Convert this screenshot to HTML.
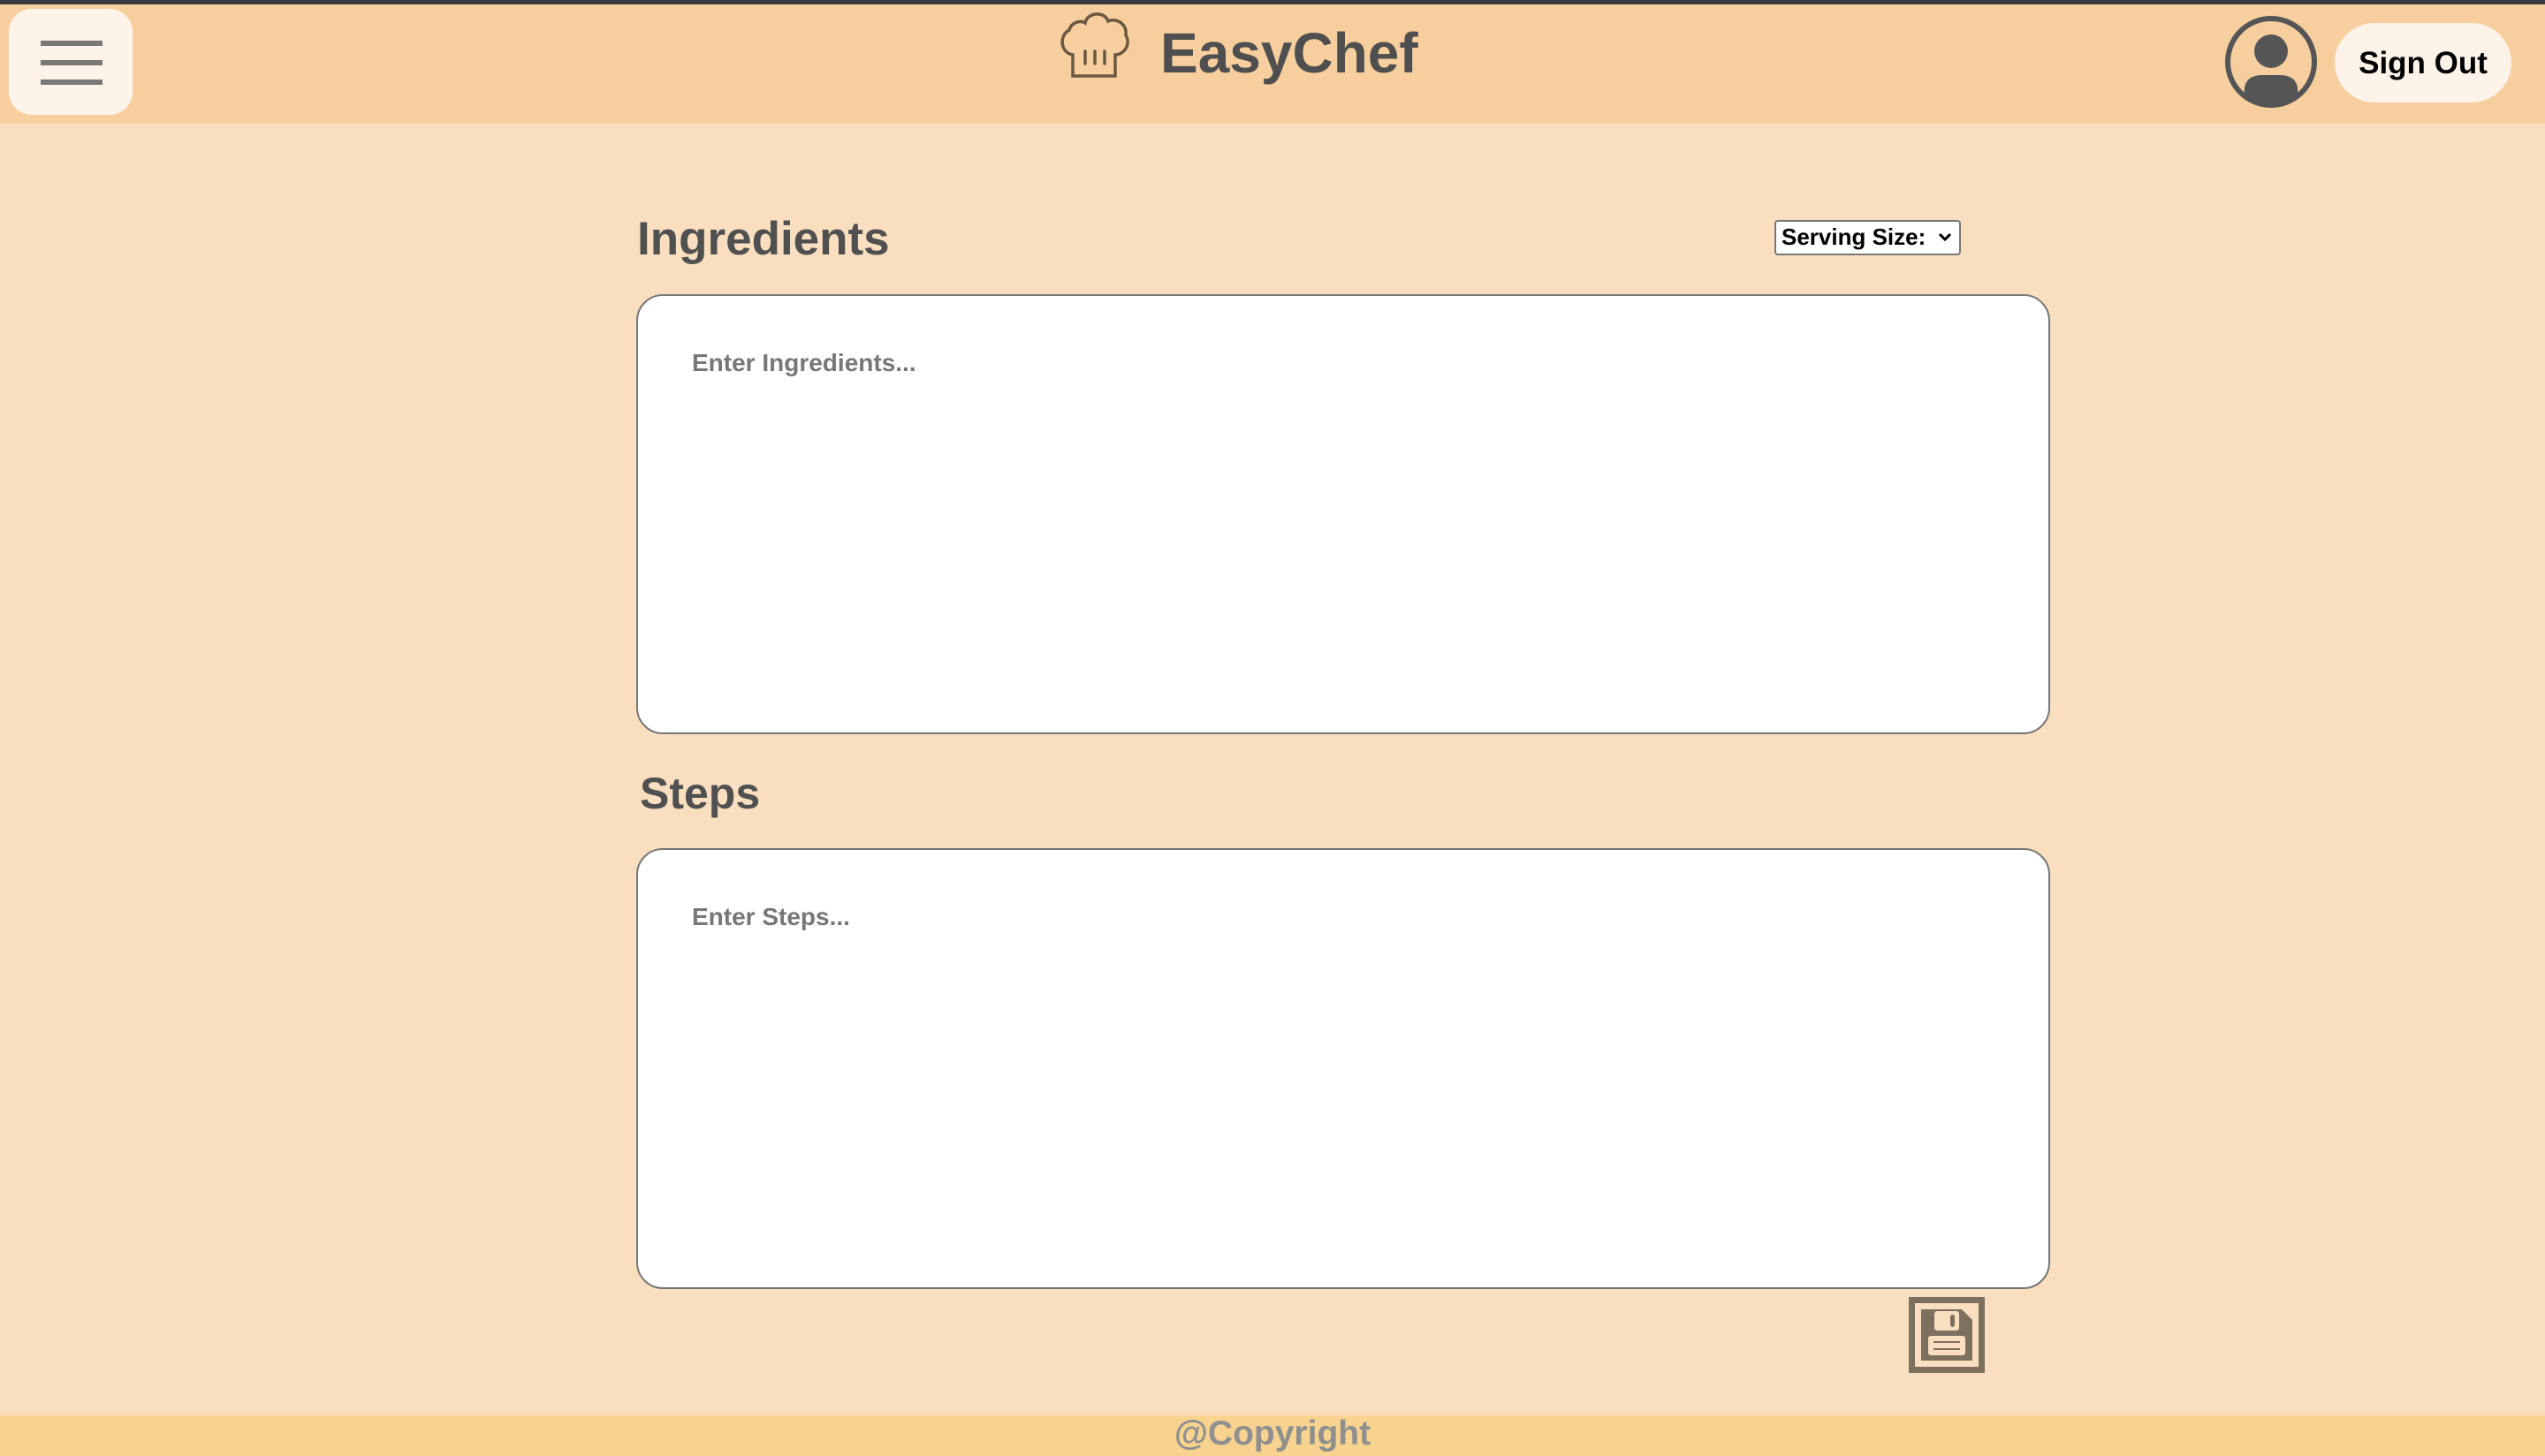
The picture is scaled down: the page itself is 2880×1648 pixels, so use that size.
<!DOCTYPE html>
<html><head><meta charset="utf-8"><style>
*{margin:0;padding:0;box-sizing:border-box}
body{width:2880px;height:1648px;overflow:hidden;background:#f9dfbf;font-family:"Liberation Sans",sans-serif;position:relative}
.a{position:absolute}
.t{line-height:1;white-space:nowrap}
.ta{position:absolute;left:720px;width:1600px;background:#fff;border:2px solid #777;border-radius:30px}
</style></head><body>
<div class="a" style="left:0;top:0;width:2880px;height:140px;background:#f7cf9e"></div>
<div class="a" style="left:0;top:0;width:2880px;height:5px;background:#3a3b40"></div>
<div class="a" style="left:10px;top:10px;width:140px;height:120px;background:#fdf3e9;border-radius:26px"></div>
<div class="a" style="left:46px;top:46px;width:70px;height:6px;background:#7a7876"></div>
<div class="a" style="left:46px;top:68px;width:70px;height:6px;background:#7a7876"></div>
<div class="a" style="left:46px;top:90px;width:70px;height:6px;background:#7a7876"></div>
<svg class="a" style="left:1196px;top:6px" width="86" height="84" viewBox="0 0 86 84" fill="none" stroke="#6b5840" stroke-width="3.5">
<path d="M18 56 C4 54 2 34 14 28 C16 20 26 16 32 20 C34 8 54 6 58 18 C66 14 80 20 78 34 C84 44 76 56 66 56 L66 80 L18 80 Z"/>
<path d="M32 52V66M43 52V66M54 52V66" stroke-linecap="round"/>
</svg>
<div class="a t" style="left:1313px;top:28px;font-size:64px;font-weight:bold;color:#4f4f4f">EasyChef</div>
<svg class="a" style="left:2516px;top:16px" width="108" height="108" viewBox="0 0 108 108">
<circle cx="54" cy="54" r="49" fill="none" stroke="#555" stroke-width="6"/>
<circle cx="54" cy="42" r="19" fill="#555"/>
<path d="M24 92 C22 76 30 69 44 69 L64 69 C78 69 86 76 84 92 C70 104 38 104 24 92Z" fill="#555"/>
</svg>
<div class="a" style="left:2642px;top:26px;width:200px;height:90px;background:#fdf3e9;border-radius:45px"></div>
<div class="a t" style="left:2642px;width:200px;text-align:center;top:54px;font-size:35px;font-weight:bold;color:#000">Sign Out</div>
<div class="a t" style="left:721px;top:244px;font-size:53px;font-weight:bold;color:#505050">Ingredients</div>
<div class="a" style="left:2008px;top:249px;width:211px;height:40px;border:2px solid #777;border-radius:4px;background:#fff"></div>
<div class="a t" style="left:2016px;top:255px;font-size:26px;font-weight:bold;color:#000">Serving Size:</div>
<svg class="a" style="left:2192px;top:261px" width="18" height="14" viewBox="0 0 18 14"><path d="M3 4l6 6 6-6" fill="none" stroke="#000" stroke-width="3"/></svg>
<div class="ta" style="top:333px;height:498px"></div>
<div class="a t" style="left:783px;top:397px;font-size:28px;font-weight:bold;color:#777">Enter Ingredients...</div>
<div class="a t" style="left:724px;top:873px;font-size:50px;font-weight:bold;color:#505050">Steps</div>
<div class="ta" style="top:960px;height:499px"></div>
<div class="a t" style="left:783px;top:1024px;font-size:28px;font-weight:bold;color:#777">Enter Steps...</div>
<svg class="a" style="left:2160px;top:1468px" width="86" height="86" viewBox="0 0 86 86">
<rect x="3.5" y="3.5" width="79" height="79" fill="none" stroke="#7d705f" stroke-width="7"/>
<path d="M14 14 H60 L72 26 V72 H14Z" fill="#7d705f"/>
<rect x="29" y="16" width="28" height="22" rx="3" fill="#f9dfbf"/>
<rect x="47" y="20" width="5" height="14" rx="2.5" fill="#7d705f"/>
<rect x="22" y="44" width="42" height="22" rx="3" fill="#f9dfbf"/>
<path d="M28 51H58M28 59H58" stroke="#7d705f" stroke-width="2"/>
</svg>
<div class="a" style="left:0;top:1602px;width:2880px;height:46px;background:#f7d38f"></div>
<div class="a t" style="left:0;width:2880px;text-align:center;top:1603px;font-size:39px;font-weight:bold;color:#8f8f8f">@Copyright</div>
</body></html>
